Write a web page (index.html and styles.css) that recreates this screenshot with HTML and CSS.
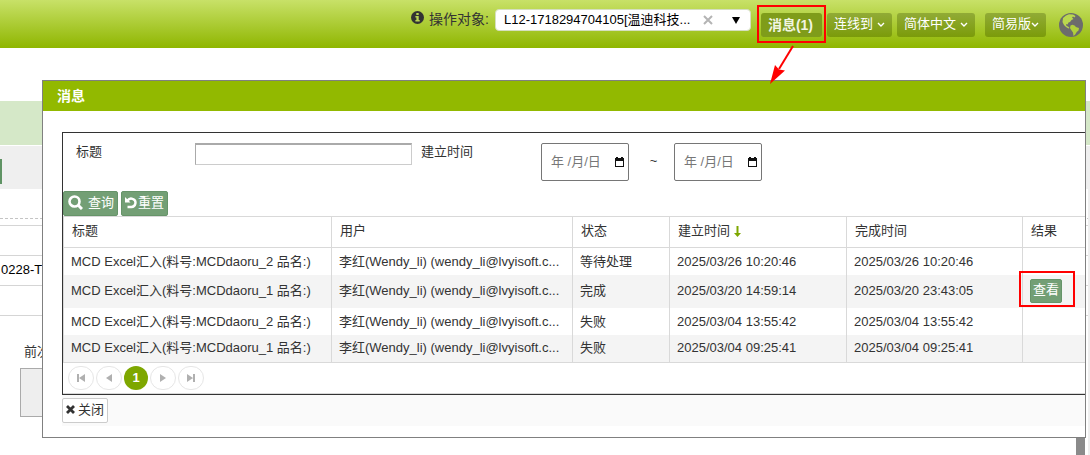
FILE: index.html
```html
<!DOCTYPE html>
<html lang="zh-CN">
<head>
    <meta charset="UTF-8">
    <meta name="viewport" content="width=device-width, initial-scale=1.0">
    <title>消息</title>
    <link rel="stylesheet" href="styles.css">
</head>
<body>
    <header class="topbar">
        <label class="target-label" for="target">
            <svg class="info-icon" width="13" height="13" viewBox="0 0 13 13">
                <circle cx="6.5" cy="6.5" r="6.5" fill="#333"/>
                <path d="M5.3 2h2.4v2H5.3zM4.4 5h3.3v4h1v1.5H4.4V9h1V6.5h-1z" fill="#b9d653"/>
            </svg>
            操作对象:
        </label>
        <div class="combo">
            <input type="text" id="target" value="L12-1718294704105[温迪科技...">
            <button type="button" class="combo-btn" aria-label="清除">
                <svg width="10" height="10" viewBox="0 0 10 10"><path d="M1 1l8 8M9 1l-8 8" stroke="#b4b4b4" stroke-width="2"/></svg>
            </button>
            <button type="button" class="combo-btn" aria-label="展开">
                <svg width="8" height="7" viewBox="0 0 8 7"><path d="M0 0h8L4 7z" fill="#000"/></svg>
            </button>
        </div>
        <div class="top-buttons">
            <div class="marked">
                <button type="button" class="top-btn message-btn">消息(1)</button>
                <span class="mark mark-message"></span>
                <svg class="arrow" width="28" height="40" viewBox="0 0 28 40">
                    <path d="M24 1L10 24" stroke="#f00" stroke-width="2"/>
                    <path d="M1 39L6 20l4 4.500 6 1z" fill="#f00"/>
                </svg>
            </div>
            <button type="button" class="top-btn">连线到
                <svg width="8" height="5" viewBox="0 0 8 5"><path d="M1 1l3 3 3-3" fill="none" stroke="#fff" stroke-width="1.4"/></svg>
            </button>
            <button type="button" class="top-btn">简体中文
                <svg width="8" height="5" viewBox="0 0 8 5"><path d="M1 1l3 3 3-3" fill="none" stroke="#fff" stroke-width="1.4"/></svg>
            </button>
        </div>
        <button type="button" class="top-btn mode-btn">简易版
            <svg width="8" height="5" viewBox="0 0 8 5"><path d="M1 1l3 3 3-3" fill="none" stroke="#fff" stroke-width="1.4"/></svg>
        </button>
        <svg class="globe" width="24" height="24" viewBox="0 0 24 24">
            <circle cx="12" cy="12" r="12" fill="#6c6c6c"/>
            <path d="M4 5l3-2.500 3-1.200 4 .2 2.500 1.500-1 1.500-1.500-1-1 1 1.500 1.500-2 1-1.500 2-1.500.5-1 2-1.500-.5.500 2 1.500.5 1.500 1.500-1 .5-2.500-1.500-2-2-1.500-3z" fill="#bad84e"/>
            <path d="M11.500 12.500l2-.8 2.500 1 .8 1.300 3.200 1-.5 2.500-1.800 1.500-1.500 2.500-1.700 1.500-.5-3.500-1.800-2.500-1.200-2z" fill="#b0d03c"/>
        </svg>
    </header>

    <!-- Page behind the dialog -->
    <main class="page">
        <div class="page-title"></div>
        <div class="page-tools"><span class="tool-edge"></span></div>
        <div class="page-dashed"></div>
        <div class="page-gap"></div>
        <div class="page-row"></div>
        <div class="page-row page-code">0228-T</div>
        <div class="page-row"></div>
        <div class="page-field">
            <label for="previous">前次</label>
            <textarea id="previous" disabled></textarea>
        </div>
        <span class="scroll-track"></span>
        <span class="scroll-thumb"></span>
    </main>

    <section class="dialog" role="dialog" aria-labelledby="dialog-title">
        <h1 class="dialog-title" id="dialog-title">消息</h1>
        <div class="dialog-body">
            <div class="panel">
                <form class="filters">
                    <label class="title-label" for="title">标题</label>
                    <input type="text" class="title-input" id="title">
                    <label class="time-label" for="date-from">建立时间</label>
                    <div class="date-box">
                        <input type="text" id="date-from" placeholder="年 /月/日">
                        <svg width="9" height="10" viewBox="0 0 9 10"><path d="M0 1h1V0h2v1h3V0h2v1h1v9H0zM1 4v5h7V4z" fill="#111" fill-rule="evenodd"/></svg>
                    </div>
                    <span class="tilde">~</span>
                    <div class="date-box">
                        <input type="text" id="date-to" placeholder="年 /月/日" aria-label="建立时间">
                        <svg width="9" height="10" viewBox="0 0 9 10"><path d="M0 1h1V0h2v1h3V0h2v1h1v9H0zM1 4v5h7V4z" fill="#111" fill-rule="evenodd"/></svg>
                    </div>
                </form>
                <div class="actions">
                    <button type="button" class="green-btn search-btn">
                        <svg width="15" height="15" viewBox="0 0 15 15"><circle cx="6.500" cy="6.500" r="5" fill="none" stroke="#fff" stroke-width="2.600"/><path d="M10 10l4 4" stroke="#fff" stroke-width="3"/></svg>
                        查询
                    </button>
                    <button type="button" class="green-btn">
                        <svg width="12" height="12" viewBox="0 0 12 12"><path d="M2.500 3.500C4 1.500 6 1.200 7.500 1.800A4.200 4.200 0 0 1 6 10H2.500" fill="none" stroke="#fff" stroke-width="2.400"/><path d="M0 0v5.500h5.500z" fill="#fff"/></svg>
                        重置
                    </button>
                </div>
                <table class="grid">
                    <colgroup>
                        <col class="col-title">
                        <col class="col-user">
                        <col class="col-state">
                        <col class="col-created">
                        <col class="col-finished">
                        <col>
                    </colgroup>
                    <thead>
                        <tr>
                            <th>标题</th>
                            <th>用户</th>
                            <th>状态</th>
                            <th>建立时间 <svg class="sort-icon" width="7" height="11" viewBox="0 0 7 11"><path d="M3.500 0v8" stroke="#7ea700" stroke-width="2"/><path d="M0 7h7l-3.500 4z" fill="#7ea700"/></svg></th>
                            <th>完成时间</th>
                            <th>结果</th>
                        </tr>
                    </thead>
                    <tbody>
                        <tr>
                            <td>MCD Excel汇入(料号:MCDdaoru_2 品名:)</td>
                            <td>李红(Wendy_li) (wendy_li@lvyisoft.c...</td>
                            <td>等待处理</td>
                            <td>2025/03/26 10:20:46</td>
                            <td>2025/03/26 10:20:46</td>
                            <td></td>
                        </tr>
                        <tr class="tall">
                            <td>MCD Excel汇入(料号:MCDdaoru_1 品名:)</td>
                            <td>李红(Wendy_li) (wendy_li@lvyisoft.c...</td>
                            <td>完成</td>
                            <td>2025/03/20 14:59:14</td>
                            <td>2025/03/20 23:43:05</td>
                            <td>
                                <div class="marked">
                                    <button type="button" class="green-btn view-btn">查看</button>
                                    <span class="mark mark-view"></span>
                                </div>
                            </td>
                        </tr>
                        <tr>
                            <td>MCD Excel汇入(料号:MCDdaoru_2 品名:)</td>
                            <td>李红(Wendy_li) (wendy_li@lvyisoft.c...</td>
                            <td>失败</td>
                            <td>2025/03/04 13:55:42</td>
                            <td>2025/03/04 13:55:42</td>
                            <td></td>
                        </tr>
                        <tr>
                            <td>MCD Excel汇入(料号:MCDdaoru_1 品名:)</td>
                            <td>李红(Wendy_li) (wendy_li@lvyisoft.c...</td>
                            <td>失败</td>
                            <td>2025/03/04 09:25:41</td>
                            <td>2025/03/04 09:25:41</td>
                            <td></td>
                        </tr>
                    </tbody>
                </table>
                <nav class="pager">
                    <button type="button" class="page-btn" aria-label="第一页"><svg width="8" height="8" viewBox="0 0 8 8"><path d="M0 0h2v8H0zM8 0v8L2 4z" fill="#b0b0b0"/></svg></button>
                    <button type="button" class="page-btn" aria-label="上一页"><svg width="6" height="8" viewBox="0 0 6 8"><path d="M6 0v8L0 4z" fill="#b0b0b0"/></svg></button>
                    <button type="button" class="page-btn current">1</button>
                    <button type="button" class="page-btn" aria-label="下一页"><svg width="6" height="8" viewBox="0 0 6 8"><path d="M0 0v8l6-4z" fill="#b0b0b0"/></svg></button>
                    <button type="button" class="page-btn" aria-label="最后一页"><svg width="8" height="8" viewBox="0 0 8 8"><path d="M6 0h2v8H6zM0 0v8l6-4z" fill="#b0b0b0"/></svg></button>
                </nav>
            </div>
            <div class="dialog-footer">
                <button type="button" class="close-btn">
                    <svg width="9" height="9" viewBox="0 0 9 9"><path d="M1 1l7 7M8 1L1 8" stroke="#333" stroke-width="2.800"/></svg>
                    关闭
                </button>
            </div>
        </div>
    </section>
</body>
</html>
```

FILE: styles.css
```css
* {
    box-sizing: border-box;
}
body {
    margin: 0;
    min-height: 100vh;
    display: flex;
    flex-direction: column;
    position: relative;
    overflow: hidden;
    font-family: "Liberation Sans", Arial, "Noto Sans CJK SC", sans-serif;
    font-size: 13px;
    line-height: 18px;
    color: #333;
    background: #fff;
}
button,
input {
    font: inherit;
    margin: 0;
}
button {
    display: inline-flex;
    align-items: center;
    justify-content: center;
    padding: 0;
    white-space: nowrap;
    cursor: pointer;
}
svg {
    flex: none;
}

/* top bar */
.topbar {
    display: flex;
    align-items: center;
    justify-content: flex-end;
    height: 48px;
    padding: 2px 7px 0 0;
    background: linear-gradient(#c8e168, #8fb600);
}
.target-label {
    display: flex;
    align-items: center;
    gap: 5px;
    margin: 0 6px 12px 0;
    font-size: 14px;
}
.info-icon {
    margin-bottom: 4px;
}
.combo {
    display: flex;
    width: 256px;
    height: 22px;
    margin: 0 10px 10px 0;
    background: #fff;
    border: 1px solid #d5dfc0;
    border-radius: 4px;
}
.combo input {
    flex: 1;
    min-width: 0;
    padding: 0 0 0 8px;
    border: 0;
    background: none;
    color: #000;
}
.combo-btn {
    width: 28px;
    border: 0;
    background: none;
}
.top-buttons {
    display: flex;
    gap: 5px;
    margin-right: 10px;
}
.top-btn {
    gap: 4px;
    height: 24px;
    padding: 0 7px 2px;
    border: 0;
    border-radius: 3px;
    color: #fff;
    background: linear-gradient(#91ab36, #7b9b0a);
}
.message-btn {
    width: 61px;
    padding: 0 4px 0 2px;
    font-size: 14px;
    font-weight: bold;
    color: #f1f5e2;
    background: #7f9c1a;
}
.mode-btn {
    gap: 0;
    margin-right: 13px;
}
.marked {
    position: relative;
    display: flex;
}
.mark {
    position: absolute;
    border: 2px solid #f00;
    pointer-events: none;
}
.mark-message {
    inset: -8px -4px -6px;
}
.arrow {
    position: absolute;
    left: 8px;
    top: 32px;
    z-index: 3;
}

/* page behind the dialog */
.page {
    position: relative;
    flex: 1;
    padding-top: 53px;
}
.page-title {
    height: 44px;
    background: #d5e8c8;
}
.page-tools {
    height: 43px;
    margin-top: 1px;
    padding-top: 13px;
    background: #efefef;
}
.tool-edge {
    display: block;
    width: 2px;
    height: 25px;
    background: #5f9364;
}
.page-dashed {
    height: 30px;
    border-bottom: 1px dashed #c4c4c4;
}
.page-gap {
    height: 7px;
    border-bottom: 1px solid #d5d5d5;
}
.page-row {
    height: 30px;
    border-bottom: 1px solid #d5d5d5;
}
.page-code {
    padding-left: 1px;
    color: #000;
    line-height: 28px;
}
.page-field {
    display: flex;
    flex-direction: column;
    align-items: flex-start;
    gap: 7px;
    padding: 27px 0 0 20px;
}
.page-field label {
    padding-left: 4px;
}
.page-field textarea {
    width: 200px;
    height: 49px;
    border: 1px solid #aaa;
    background: #eee;
    resize: none;
}
.scroll-track {
    position: absolute;
    top: 98px;
    right: 0;
    bottom: 0;
    width: 2px;
    background: #efefef;
}
.scroll-thumb {
    position: absolute;
    right: 5px;
    bottom: 0;
    width: 9px;
    height: 60px;
    background: #8a8a8a;
}

/* dialog */
.dialog {
    position: absolute;
    top: 80px;
    left: 42px;
    right: 4px;
    z-index: 2;
    padding-bottom: 11px;
    border: 1px solid #808080;
    background: #fff;
}
.dialog-title {
    margin: 0;
    padding: 0 14px;
    font-size: 14px;
    line-height: 30px;
    color: #fff;
    background: #92b900;
}
.dialog-body {
    padding: 21px 0 0 19px;
}
.panel {
    border: 1px solid #333;
    border-right: 0;
}
.filters {
    display: flex;
    align-items: flex-start;
    height: 58px;
    padding: 10px 0 0 13px;
}
.title-label {
    width: 119px;
}
.title-input {
    width: 217px;
    height: 22px;
    border: 1px solid #ccc;
    border-top: 2px solid #aaa;
    border-left-color: #aaa;
}
.time-label {
    width: 120px;
    margin-left: 9px;
}
.date-box {
    display: flex;
    align-items: center;
    width: 88px;
    height: 38px;
    padding: 0 4px 0 9px;
    border: 1px solid #767676;
    border-radius: 2px;
}
.date-box input {
    flex: 1;
    min-width: 0;
    padding: 0;
    border: 0;
    background: none;
}
.date-box input::placeholder {
    color: #777;
    opacity: 1;
}
.tilde {
    width: 45px;
    padding-left: 4px;
    line-height: 36px;
    text-align: center;
}
.actions {
    display: flex;
    gap: 3px;
}
.green-btn {
    gap: 1px;
    height: 25px;
    padding: 0 3px 2px;
    border: 1px solid #669469;
    border-radius: 2px;
    color: #fff;
    background: #739f75;
}
.search-btn {
    gap: 5px;
    padding-left: 4px;
}

.grid {
    width: 100%;
    table-layout: fixed;
    border-collapse: separate;
    border-spacing: 0;
    border: 1px solid #d9d9d9;
    border-right: 0;
}
.col-title {
    width: 268px;
}
.col-user {
    width: 241px;
}
.col-state {
    width: 97px;
}
.col-created {
    width: 177px;
}
.col-finished {
    width: 176px;
}
.grid th,
.grid td {
    border-right: 1px solid #d9d9d9;
    text-align: left;
    white-space: nowrap;
}
.grid th:last-child,
.grid td:last-child {
    border-right: 0;
}
.grid th {
    height: 31px;
    padding: 0 8px 2px;
    font-weight: normal;
    border-bottom: 1px solid #d9d9d9;
}
.grid td {
    height: 27px;
    padding: 0 7px;
}
.grid .tall td {
    height: 33px;
}
.grid tbody tr:nth-child(even) {
    background: #f4f4f4;
}
.grid tbody tr:nth-child(even) td {
    padding-bottom: 2px;
}
.sort-icon {
    vertical-align: -2px;
}
.view-btn {
    height: 24px;
    padding: 0 2px 2px;
}
.mark-view {
    inset: -8px auto -4px -11px;
    width: 56px;
}

.pager {
    display: flex;
    align-items: center;
    gap: 2px;
    height: 31px;
    padding-left: 5px;
    border-bottom: 1px solid #d9d9d9;
}
.page-btn {
    width: 26px;
    height: 24px;
    border: 1px solid #e6e6e6;
    border-radius: 12px;
    background: #fff;
}
.page-btn.current {
    width: 24px;
    border: 0;
    font-weight: bold;
    color: #fff;
    background: #7ea700;
}

.dialog-footer {
    display: flex;
    padding: 3px 0;
    background: #fafafa;
}
.close-btn {
    gap: 3px;
    height: 25px;
    padding: 0 3px 2px;
    border: 1px solid #ccc;
    border-radius: 2px;
    color: #333;
    background: #fff;
}
```
